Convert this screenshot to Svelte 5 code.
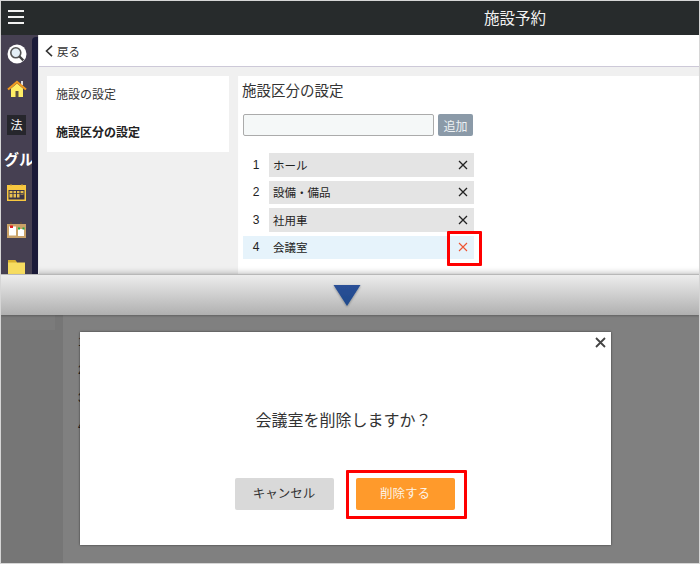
<script>
  const rows = [
    { n: 1, label: 'ホール' },
    { n: 2, label: '設備・備品' },
    { n: 3, label: '社用車' },
    { n: 4, label: '会議室', active: true }
  ];
</script>

<div class="frame">
  <section class="top">
    <header class="head">
      <svg class="burger" width="16" height="16" viewBox="0 0 16 16"><path d="M0 2h16M0 8h16M0 14h16" stroke="#f2f2f2" stroke-width="2"/></svg>
      <h1>施設予約</h1>
    </header>
    <div class="body">
      <nav class="rail">
        <svg class="i-search" width="20" height="20" viewBox="0 0 20 20">
          <circle cx="10" cy="10" r="9.500" fill="#fff"/>
          <circle cx="8.800" cy="8.800" r="5" fill="#e4eff6" stroke="#555" stroke-width="1.600"/>
          <path d="M12.500 12.500l3.800 3.800" stroke="#444" stroke-width="2.400"/>
        </svg>
        <svg class="i-home" width="20" height="18" viewBox="0 0 20 18">
          <path d="M4 8.500L10 3.500l6 5V17H4z" fill="#ffee66"/>
          <rect x="8.500" y="11" width="3" height="6" fill="#5a5040"/>
          <rect x="14" y="1" width="2" height="4" fill="#ddd"/>
          <path d="M1 9.500L10 2l9 7.500" fill="none" stroke="#f09a20" stroke-width="2.200"/>
        </svg>
        <span class="i-law">法</span>
        <span class="i-group">グループ</span>
        <svg class="i-cal" width="19" height="17" viewBox="0 0 19 17">
          <rect x="0" y="1" width="19" height="16" fill="#f8c840"/>
          <rect x="1.500" y="6" width="16" height="9.500" fill="#3a3548"/>
          <path d="M2.500 7h3v6.500h-3zM6.500 7h2.500v6.500H6.500zM10 7h2.500v6.500H10zM13.500 7h3v3.500h-3z" fill="#e8c050"/>
          <path d="M2.500 9.500h14" stroke="#3a3548" stroke-width=".8"/>
          <path d="M4 0v2M15 0v2" stroke="#c89a30"/>
        </svg>
        <svg class="i-board" width="19" height="16" viewBox="0 0 19 16">
          <rect x="0" y="2" width="19" height="14" fill="#c9a268"/>
          <rect x="2" y="4.500" width="7" height="9" fill="#fff"/>
          <rect x="11" y="7" width="6" height="7" fill="#fff"/>
          <rect x="3" y="3.500" width="3" height="2.500" fill="#e02020"/>
          <path d="M11 5.500h2v2h-2zM15.500 5.500h2v2h-2z" fill="#20a840"/>
          <path d="M4 0v2M14 0v2" stroke="#6a5030"/>
        </svg>
        <svg class="i-folder" width="17" height="15" viewBox="0 0 17 15">
          <path d="M0 0h7l2 2.500h8V15H0z" fill="#f6dc60"/>
          <path d="M0 0h7l2 2.500H0z" fill="#d8b030"/>
        </svg>
      </nav>
      <div class="strip"></div>
      <main class="main">
        <div class="back">
          <svg width="8" height="12" viewBox="0 0 8 12"><path d="M7 .8L1.500 6 7 11.200" fill="none" stroke="#333" stroke-width="1.600"/></svg>
          <span>戻る</span>
        </div>
        <div class="content">
          <aside class="side">
            <div class="side-item">施設の設定</div>
            <div class="side-item bold">施設区分の設定</div>
          </aside>
          <div class="panel">
            <h2>施設区分の設定</h2>
            <div class="add">
              <input type="text" aria-label="施設区分" />
              <button type="button">追加</button>
            </div>
            <ul class="list">
              {#each rows as row}
                <li class="row" class:active={row.active}>
                  <span class="num">{row.n}</span>
                  <span class="label">
                    <span>{row.label}</span>
                    {#if row.active}
                      <svg width="10" height="10" viewBox="0 0 10 10"><path d="M1 1l8 8M9 1l-8 8" stroke="#ee5533" stroke-width="1.100"/></svg>
                    {:else}
                      <svg width="10" height="10" viewBox="0 0 10 10"><path d="M1 1l8 8M9 1l-8 8" stroke="#222" stroke-width="1.300"/></svg>
                    {/if}
                  </span>
                  {#if row.active}<span class="mark-x"></span>{/if}
                </li>
              {/each}
            </ul>
          </div>
        </div>
      </main>
    </div>
  </section>

  <section class="band">
    <svg width="30" height="24" viewBox="0 0 30 24">
      <defs>
        <linearGradient id="tri" x1="0" y1="0" x2="0" y2="1">
          <stop offset="0" stop-color="#2a4f96"/>
          <stop offset="1" stop-color="#1f4a8c"/>
        </linearGradient>
        <filter id="soft" x="-20%" y="-20%" width="140%" height="140%">
          <feDropShadow dx="0" dy="1" stdDeviation="0.800" flood-color="#000" flood-opacity="0.350"/>
        </filter>
      </defs>
      <path d="M1.500 1h27L15 22z" fill="url(#tri)" filter="url(#soft)"/>
    </svg>
  </section>

  <section class="lower">
    <div class="dim-left"><div class="dim-box"></div></div>
    <div class="dim-list">
      <span>1</span><span>2</span><span>3</span><span>4</span>
    </div>
    <div class="dialog">
      <svg class="close" width="11" height="11" viewBox="0 0 11 11"><path d="M1 1l9 9M10 1l-9 9" stroke="#444" stroke-width="1.800"/></svg>
      <p>会議室を削除しますか？</p>
      <div class="actions">
        <button type="button" class="btn cancel">キャンセル</button>
        <div class="del-wrap">
          <button type="button" class="btn del">削除する</button>
          <span class="mark-del"></span>
        </div>
      </div>
    </div>
  </section>
</div>

<style>
  :global(body) {
    margin: 0;
    background: #d8d8d8;
  }
  .frame {
    width: 700px;
    height: 564px;
    box-sizing: border-box;
    border: 1px solid #d6d6d6;
    display: flex;
    flex-direction: column;
    overflow: hidden;
    font-family: "Noto Sans CJK JP", "Liberation Sans", sans-serif;
    color: #333;
  }
  .top {
    height: 273px;
    display: flex;
    flex-direction: column;
    overflow: hidden;
    flex: none;
  }
  .head {
    height: 34px;
    flex: none;
    background: #272b2c;
    display: flex;
    align-items: center;
  }
  .burger {
    margin: 0 0 3px 7px;
    flex: none;
  }
  .head h1 {
    margin: 0 0 3px 460px;
    font-size: 15.500px;
    font-weight: 400;
    color: #f2f2f2;
  }
  .body {
    flex: 1;
    display: flex;
    min-height: 0;
    background: linear-gradient(#464052, #464052) no-repeat 31px 0 / 6px 6px;
  }
  .rail {
    width: 31px;
    flex: none;
    background: #464052;
    display: flex;
    flex-direction: column;
    align-items: center;
    overflow: hidden;
    padding-top: 9px;
    box-sizing: border-box;
  }
  .rail > * {
    flex: none;
  }
  .i-search {
    margin-left: 1px;
  }
  .i-home {
    margin-top: 16px;
  }
  .i-law {
    margin-top: 17px;
    width: 19px;
    height: 20px;
    background: #26262c;
    color: #fff;
    font-size: 12px;
    line-height: 20px;
    text-align: center;
  }
  .i-group {
    margin-top: 13px;
    align-self: flex-start;
    margin-left: 3px;
    color: #fff;
    font-weight: 700;
    font-size: 15px;
    line-height: 22px;
    white-space: nowrap;
  }
  .i-cal {
    margin-top: 14px;
  }
  .i-board {
    margin-top: 21px;
  }
  .i-folder {
    margin-top: 22px;
  }
  .strip {
    width: 6px;
    flex: none;
    background: #1a1a38;
    border-top-left-radius: 4px;
    margin-top: 2px;
  }
  .main {
    flex: 1;
    min-width: 0;
    background: #f0f0f0;
    border-left: 1px solid #e6e6e6;
    display: flex;
    flex-direction: column;
    box-shadow: inset 0 -7px 6px -6px rgba(0, 0, 0, 0.25);
  }
  .back {
    height: 31px;
    flex: none;
    background: #fff;
    border-bottom: 1px solid #cdc9d8;
    display: flex;
    align-items: center;
    gap: 4px;
    padding-left: 6px;
    font-size: 11.500px;
  }
  .content {
    flex: 1;
    display: flex;
    gap: 9px;
    padding: 9px 0 0 8px;
    min-height: 0;
  }
  .side {
    width: 182px;
    height: 76px;
    flex: none;
    background: #fff;
  }
  .side-item {
    height: 38px;
    line-height: 35px;
    padding-left: 9px;
    font-size: 12px;
  }
  .side-item.bold {
    font-weight: 700;
    color: #222;
  }
  .panel {
    flex: 1;
    background: #fff;
    padding: 3px 0 0 5px;
    min-width: 0;
    box-shadow: inset 0 -7px 6px -6px rgba(0, 0, 0, 0.25);
  }
  .panel h2 {
    margin: 0 0 0 -1px;
    font-size: 14.500px;
    font-weight: 400;
    line-height: 21px;
    color: #333;
  }
  .add {
    display: flex;
    gap: 4px;
    margin-top: 14px;
  }
  .add input {
    width: 191px;
    height: 22px;
    box-sizing: border-box;
    margin: 0;
    padding: 0;
    background: #f5f8f8;
    border: 1px solid #ababab;
    border-radius: 2px;
    outline: none;
  }
  .add button {
    width: 35px;
    height: 22px;
    margin: 0;
    padding: 0;
    border: 0;
    border-radius: 2px;
    background: #8b9aa8;
    color: #edf1f4;
    font: inherit;
    font-size: 12px;
  }
  .list {
    list-style: none;
    margin: 17px 0 0;
    padding: 0;
    width: 231px;
    display: flex;
    flex-direction: column;
    gap: 4px;
  }
  .row {
    height: 23.500px;
    display: flex;
    align-items: center;
    font-size: 11.500px;
    position: relative;
    color: #222;
  }
  .row.active {
    background: #e6f3fb;
  }
  .num {
    width: 26px;
    text-align: center;
    flex: none;
    font-family: "Liberation Sans", sans-serif;
    font-size: 12px;
  }
  .label {
    flex: 1;
    height: 100%;
    background: #e4e4e4;
    display: flex;
    align-items: center;
    justify-content: space-between;
    padding: 0 6px 0 4px;
  }
  .row.active .label {
    background: transparent;
  }
  .mark-x {
    position: absolute;
    left: 204px;
    top: -5px;
    width: 35px;
    height: 35px;
    box-sizing: border-box;
    border: 3px solid #f00;
    border-radius: 1px;
  }
  .band {
    height: 41px;
    flex: none;
    background: linear-gradient(#ededed, #b0b0b0);
    border-top: 1px solid #b8b8b8;
    box-sizing: border-box;
    box-shadow: 0 1px 2px rgba(0, 0, 0, 0.25);
    display: flex;
    justify-content: center;
    padding: 9px 6px 0 0;
    position: relative;
    z-index: 1;
  }
  .lower {
    flex: 1;
    background: #808080;
    position: relative;
    overflow: hidden;
  }
  .dim-left {
    position: absolute;
    left: 0;
    top: 0;
    bottom: 0;
    width: 62px;
    background: #767676;
  }
  .dim-box {
    width: 54px;
    height: 15px;
    background: #7b7b7b;
  }
  .dim-list {
    position: absolute;
    left: 77px;
    top: 19px;
    display: flex;
    flex-direction: column;
    gap: 12px;
    font-size: 12px;
    line-height: 16px;
    color: #222;
    font-family: "Liberation Sans", sans-serif;
  }
  .dialog {
    position: absolute;
    left: 79px;
    top: 17px;
    width: 531px;
    height: 213px;
    background: #fff;
    box-shadow: 0 0 2px rgba(0, 0, 0, 0.6);
    display: flex;
    flex-direction: column;
    align-items: center;
  }
  .close {
    position: absolute;
    right: 5px;
    top: 5px;
  }
  .dialog p {
    margin: 75px 4px 0 0;
    font-size: 16px;
    line-height: 24px;
    color: #333;
  }
  .actions {
    display: flex;
    gap: 22px;
    margin: 47px 2px 0 0;
  }
  .btn {
    width: 99px;
    height: 32px;
    display: block;
    margin: 0;
    padding: 0 0 3px;
    border: 0;
    border-radius: 2px;
    font: inherit;
    font-size: 12.500px;
  }
  .cancel {
    background: #d9d9d9;
    color: #333;
  }
  .del {
    background: #ff9a2b;
    color: #fdf3e6;
  }
  .del-wrap {
    position: relative;
  }
  .mark-del {
    position: absolute;
    left: -10px;
    right: -12px;
    top: -8px;
    bottom: -9px;
    border: 3px solid #f00;
    border-radius: 1px;
  }
</style>
